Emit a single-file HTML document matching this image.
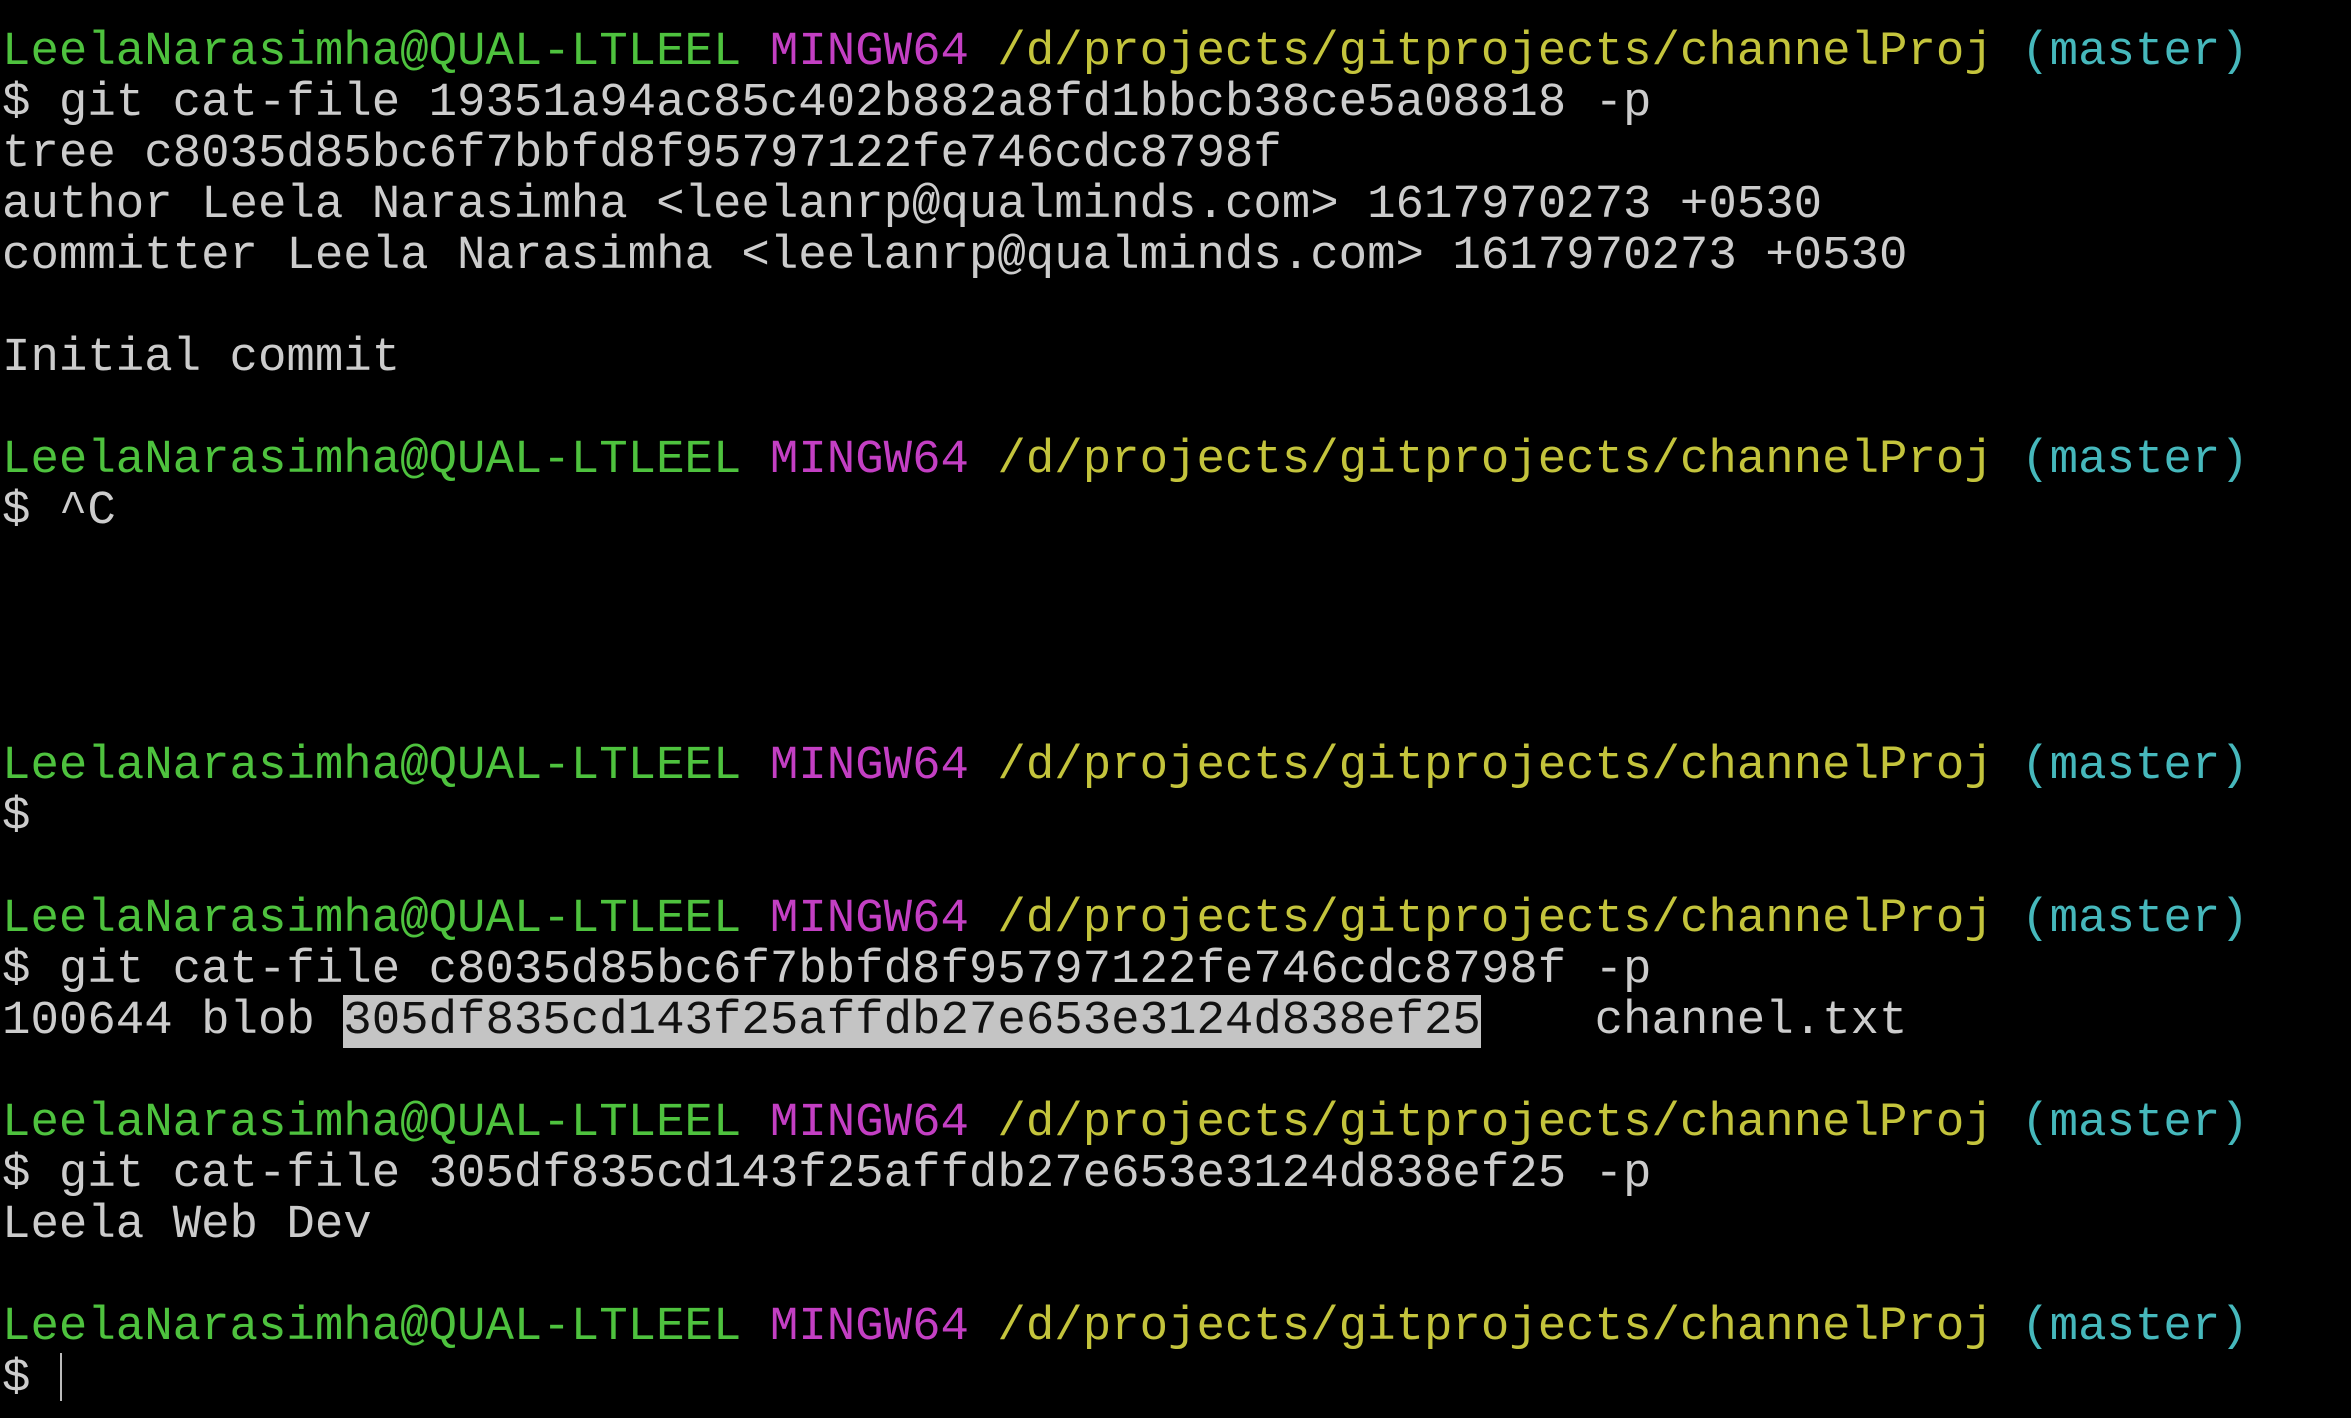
<!DOCTYPE html>
<html><head><meta charset="utf-8"><style>
html,body{margin:0;padding:0;background:#000;width:2351px;height:1418px;overflow:hidden}
pre{margin:0;position:absolute;left:2px;top:27px;font-family:"Liberation Mono",monospace;font-size:47.4px;line-height:51px;color:#cccccc;white-space:pre}
.g{color:#4ec23e}.m{color:#c33fc3}.y{color:#c4c43c}.c{color:#46b8bc}
.sel{background:#c4c4c4;color:#111}
.cur{display:inline-block;width:2px;height:48px;background:#bbb;vertical-align:-10px;margin-left:30px}
</style></head><body><pre>
<span class="g">LeelaNarasimha@QUAL-LTLEEL</span> <span class="m">MINGW64</span> <span class="y">/d/projects/gitprojects/channelProj</span> <span class="c">(master)</span>
$ git cat-file 19351a94ac85c402b882a8fd1bbcb38ce5a08818 -p
tree c8035d85bc6f7bbfd8f95797122fe746cdc8798f
author Leela Narasimha &lt;leelanrp@qualminds.com&gt; 1617970273 +0530
committer Leela Narasimha &lt;leelanrp@qualminds.com&gt; 1617970273 +0530

Initial commit

<span class="g">LeelaNarasimha@QUAL-LTLEEL</span> <span class="m">MINGW64</span> <span class="y">/d/projects/gitprojects/channelProj</span> <span class="c">(master)</span>
$ ^C




<span class="g">LeelaNarasimha@QUAL-LTLEEL</span> <span class="m">MINGW64</span> <span class="y">/d/projects/gitprojects/channelProj</span> <span class="c">(master)</span>
$

<span class="g">LeelaNarasimha@QUAL-LTLEEL</span> <span class="m">MINGW64</span> <span class="y">/d/projects/gitprojects/channelProj</span> <span class="c">(master)</span>
$ git cat-file c8035d85bc6f7bbfd8f95797122fe746cdc8798f -p
100644 blob <span class="sel">305df835cd143f25affdb27e653e3124d838ef25</span>    channel.txt

<span class="g">LeelaNarasimha@QUAL-LTLEEL</span> <span class="m">MINGW64</span> <span class="y">/d/projects/gitprojects/channelProj</span> <span class="c">(master)</span>
$ git cat-file 305df835cd143f25affdb27e653e3124d838ef25 -p
Leela Web Dev

<span class="g">LeelaNarasimha@QUAL-LTLEEL</span> <span class="m">MINGW64</span> <span class="y">/d/projects/gitprojects/channelProj</span> <span class="c">(master)</span>
$<span class="cur"></span></pre></body></html>
